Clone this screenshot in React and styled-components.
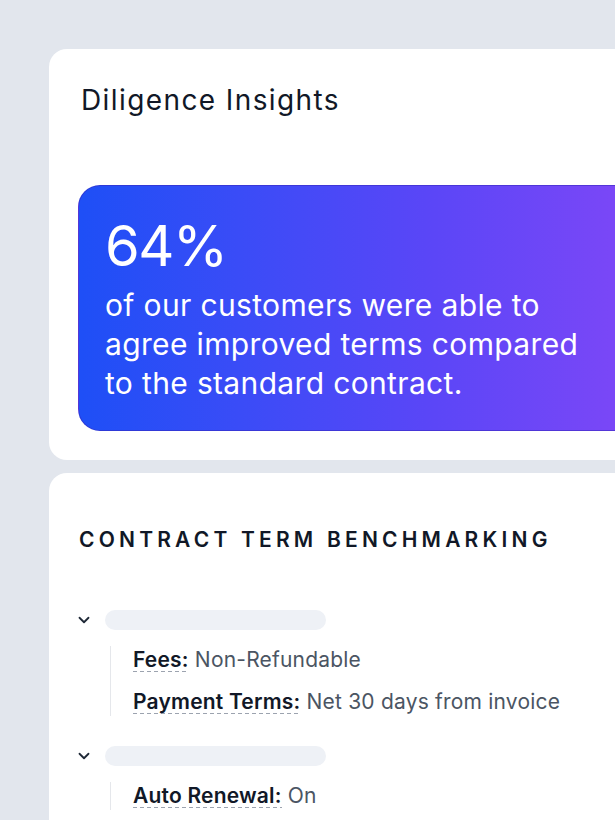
import styled, { createGlobalStyle } from "styled-components";
import { ChevronDown } from "lucide-react";

const GlobalStyle = createGlobalStyle`
  html, body {
    margin: 0;
    padding: 0;
    background: #e2e6ed;
    overflow: hidden;
    font-family: Inter, "Noto Sans", sans-serif;
    -webkit-font-smoothing: antialiased;
  }
`;

const groups = [
  {
    items: [
      { label: "Fees:", value: "Non-Refundable" },
      { label: "Payment Terms:", value: "Net 30 days from invoice" },
    ],
  },
  {
    items: [{ label: "Auto Renewal:", value: "On" }],
  },
];

export default function App() {
  return (
    <>
      <GlobalStyle />
      <Page>
        <Card $padding="34px 0 29px 29px">
          <Title>Diligence Insights</Title>
          <StatBox>
            <StatValue>64%</StatValue>
            <StatText>
              of our customers were able to agree improved terms compared to
              the standard contract.
            </StatText>
          </StatBox>
        </Card>

        <Card $padding="54px 0 40px 30px">
          <SectionHeading>Contract Term Benchmarking</SectionHeading>
          <GroupList>
            {groups.map((group, i) => (
              <Group key={i}>
                <GroupHeader>
                  <ChevronDown size={18} strokeWidth={2.4} color="#1f2937" />
                  <SkeletonBar />
                </GroupHeader>
                <Terms>
                  {group.items.map((item) => (
                    <Term key={item.label}>
                      <TermLabel>{item.label}</TermLabel> {item.value}
                    </Term>
                  ))}
                </Terms>
              </Group>
            ))}
          </GroupList>
        </Card>
      </Page>
    </>
  );
}

const Page = styled.div`
  display: flex;
  flex-direction: column;
  gap: 13px;
  padding: 49px 0 0 49px;
  width: 566px;
`;

const Card = styled.div`
  background: #ffffff;
  border-radius: 18px 0 0 18px;
  padding: ${(props) => props.$padding};
`;

const Title = styled.h2`
  margin: 0 0 68px 3px;
  font-size: 28px;
  line-height: 34px;
  font-weight: 400;
  letter-spacing: 1.4px;
  color: #111827;
`;

const StatBox = styled.div`
  border-radius: 22px 0 0 22px;
  border: 1px solid rgba(55, 40, 190, 0.55);
  border-right: none;
  padding: 24px 0 27px 26px;
  background: linear-gradient(
    90deg,
    #1e4ff6 0%,
    #3a4cf7 30%,
    #5a46f7 65%,
    #7a47f7 100%
  );
  color: #ffffff;
`;

const StatValue = styled.div`
  font-size: 56px;
  line-height: 72px;
  font-weight: 400;
  letter-spacing: -1.5px;
`;

const StatText = styled.p`
  margin: 4px 0 0;
  width: 480px;
  font-size: 30px;
  line-height: 39px;
  font-weight: 400;
  letter-spacing: 0.35px;
`;

const SectionHeading = styled.h3`
  margin: 0;
  font-size: 21px;
  line-height: 26px;
  font-weight: 600;
  letter-spacing: 4.2px;
  text-transform: uppercase;
  white-space: nowrap;
  color: #111827;
`;

const GroupList = styled.div`
  display: flex;
  flex-direction: column;
  gap: 30px;
  margin-top: 57px;
`;

const Group = styled.div`
  display: flex;
  flex-direction: column;
  gap: 16px;
`;

const GroupHeader = styled.div`
  display: flex;
  align-items: center;
  gap: 12px;
  margin-left: -4px;
`;

const SkeletonBar = styled.div`
  width: 221px;
  height: 20px;
  border-radius: 10px;
  background: #eef1f6;
`;

const Terms = styled.div`
  display: flex;
  flex-direction: column;
  gap: 14px;
  margin-left: 31px;
  padding-left: 22px;
  border-left: 1px solid #e5e7eb;
`;

const Term = styled.div`
  font-size: 21px;
  line-height: 28px;
  letter-spacing: 0.2px;
  color: #4b5563;
  white-space: nowrap;
`;

const TermLabel = styled.span`
  font-weight: 600;
  color: #111827;
  background-image: linear-gradient(to right, #9ca3af 57%, transparent 57%);
  background-size: 7px 1px;
  background-repeat: repeat-x;
  background-position: left bottom;
`;
